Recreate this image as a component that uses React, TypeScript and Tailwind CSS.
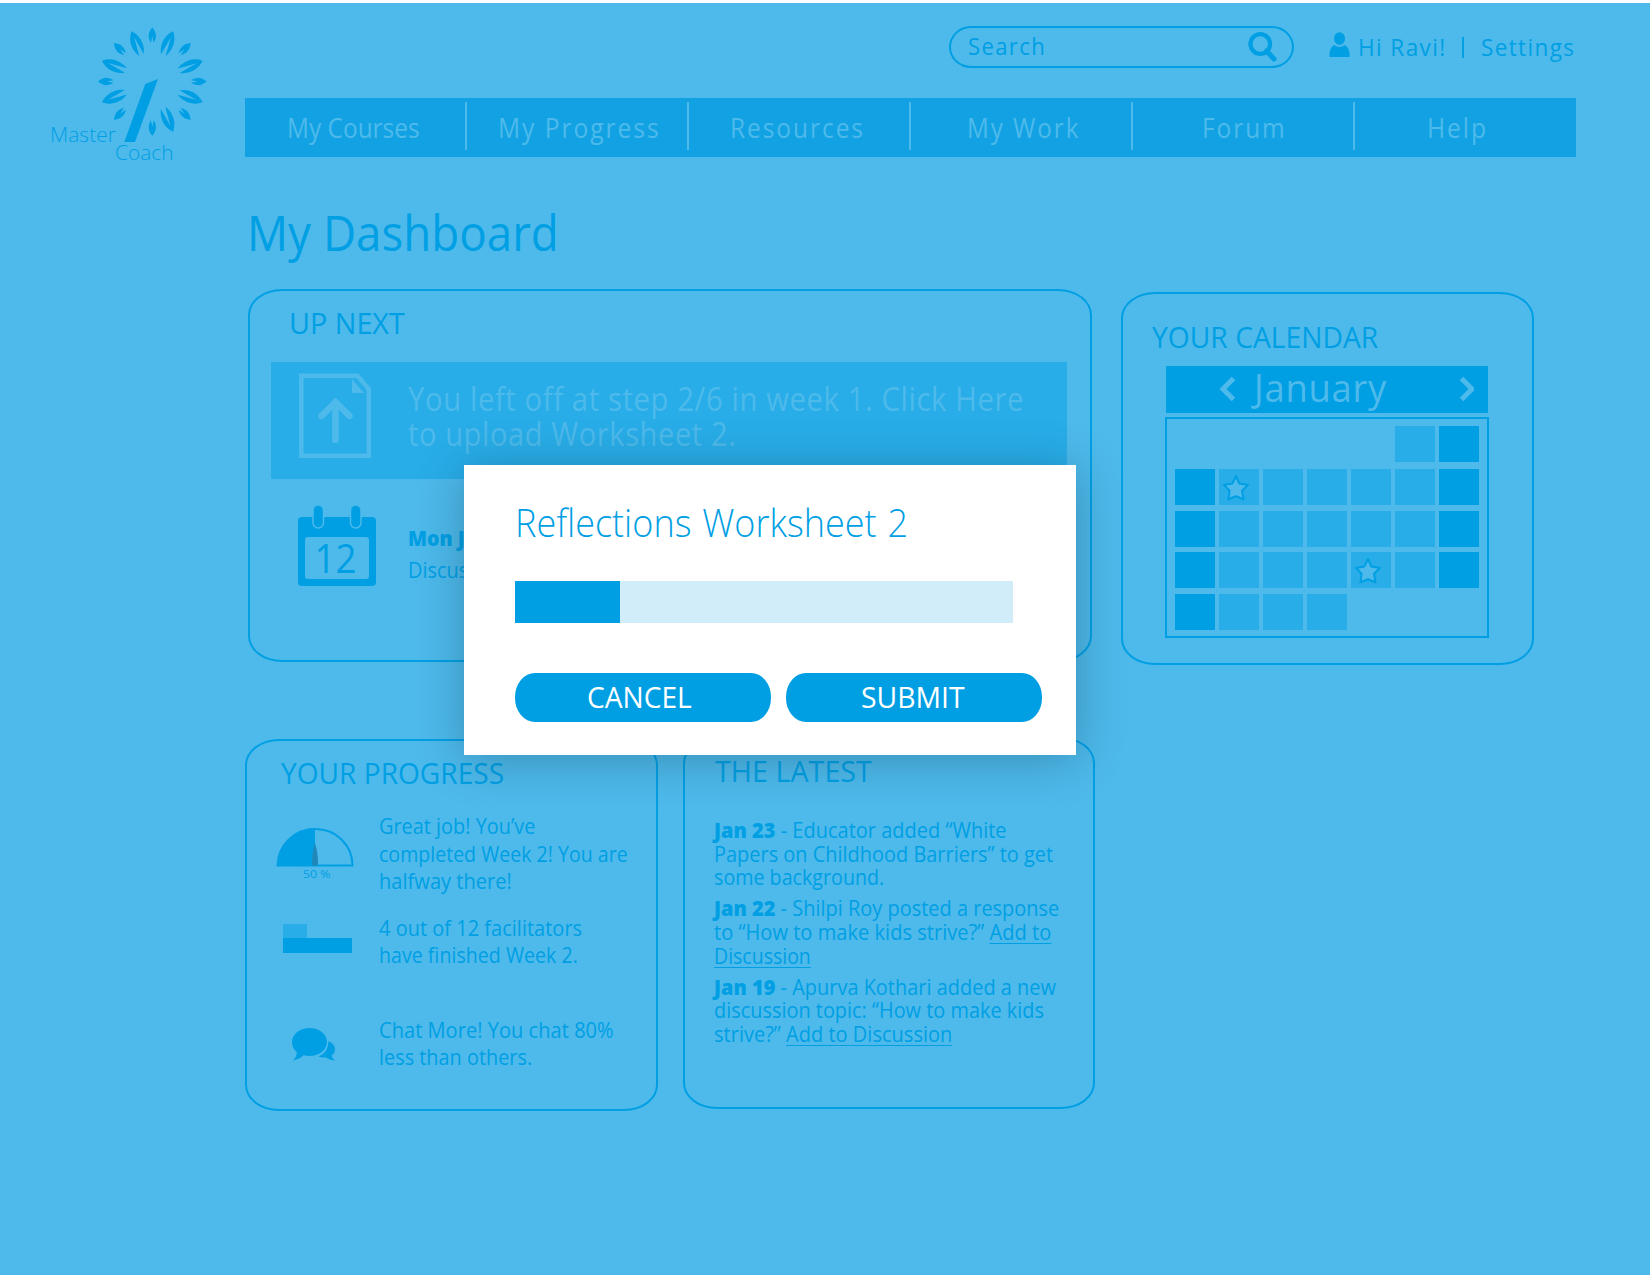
import React, { useLayoutEffect, useRef, useState } from "react";

const BLUE = "#009FE4";
const SKY = "#4DBAEB";

/** One line of text, condensed or widened to fill exactly `w` pixels. */
function Line({ w, className = "", children }: { w: number; className?: string; children: React.ReactNode }) {
  const ref = useRef<HTMLSpanElement>(null);
  const [scale, setScale] = useState(1);
  useLayoutEffect(() => {
    if (ref.current && ref.current.offsetWidth) {
      setScale(w / ref.current.offsetWidth);
    }
  }, [w]);
  return (
    <span className={"block whitespace-nowrap " + className} style={{ width: w }}>
      <span ref={ref} className="inline-block origin-left align-top" style={{ transform: `scaleX(${scale})` }}>
        {children}
      </span>
    </span>
  );
}

function Logo() {
  const all = Array.from({ length: 16 }, (_, i) => i).filter((i) => i !== 9);
  return (
    <svg width="245" height="172" viewBox="0 0 245 172" fill={BLUE}>
      {all.map((i) => (
        <g key={i} transform={`translate(152.300 81.500) rotate(${i * 22.5})`}>
          {i % 2 === 0 ? (
            <path d="M0-54.300C2.600-51 3.900-48 3.600-45C3.400-42.500 2.500-40.500 1.300-38.800L0-45.500L-1.300-38.800C-2.500-40.500-3.400-42.500-3.600-45C-3.900-48-2.600-51 0-54.300Z" />
          ) : (
            <path d="M0-54.400C4-50 5.900-44.500 5.600-39C5.400-35 4.300-31.500 2.600-28.600L.2-48L-2.300-28.600C-4.300-31.500-5.400-35-5.600-39C-5.900-44.500-4-50 0-54.400Z" />
          )}
        </g>
      ))}
      <path d="M145.300 84L158 79L135 142H124.300Z" />
      <text x="50" y="142" fontSize="20" fontWeight="350" textLength="66" lengthAdjust="spacingAndGlyphs">Master</text>
      <text x="115" y="160" fontSize="20" fontWeight="350" textLength="58.500" lengthAdjust="spacingAndGlyphs">Coach</text>
    </svg>
  );
}

const NAV = [
  { label: "My Courses", w: 133, cls: "pl-[42px]" },
  { label: "My Progress", w: 163, cls: "pl-[31px] tracking-[0.08em]" },
  { label: "Resources", w: 135, cls: "pl-[41px] tracking-[0.08em]" },
  { label: "My Work", w: 113, cls: "pl-[56px] tracking-[0.08em]" },
  { label: "Forum", w: 85, cls: "pl-[69px] tracking-[0.08em]" },
  { label: "Help", w: 61, cls: "pl-[72px] tracking-[0.08em]" },
];

const CELLS = ["     md", "dsmmmmd", "dmmmmmd", "dmmmsmd", "dmmm   "];

function Star() {
  return (
    <svg width="30" height="30" viewBox="0 0 30 30" className="ml-[2px] mt-[4px]">
      <path
        d="M15 3L18.400 10.600L27 11.900L21 17.700L22.600 26.300L15 23.200L7.400 26.300L8.600 17.700L3 11.900L11.300 10.600Z"
        fill={SKY}
        stroke={BLUE}
        strokeWidth="2"
        strokeLinejoin="round"
      />
    </svg>
  );
}

function Calendar() {
  return (
    <section className="mt-[3px] ml-[29px] h-[372.500px] w-[413px] border-2 border-[#009FE4] [border-radius:34px/26px]">
      <h2 className="ml-[28.500px] pt-[25px] text-[30px] leading-[36px]">
        <Line w={226}>YOUR CALENDAR</Line>
      </h2>
      <div className="mt-[10.500px] ml-[42.500px] flex h-[47px] w-[322px] bg-[#009FE4] text-[#4DBAEB]">
        <svg width="20" height="30" viewBox="0 0 20 30" fill="none" stroke={SKY} strokeWidth="5" className="ml-[52px] mt-[8px]">
          <path d="M15.500 4.500L5 15L15.500 25.500" />
        </svg>
        <div className="ml-[16px] w-[200px] text-[38px] leading-[42px]">
          <Line w={133} className="tracking-[0.02em]">January</Line>
        </div>
        <svg width="20" height="30" viewBox="0 0 20 30" fill="none" stroke={SKY} strokeWidth="5" className="mt-[8px]">
          <path d="M7.500 4.500L18 15L7.500 25.500" />
        </svg>
      </div>
      <div className="mt-[4.500px] ml-[42px] h-[221px] w-[324px] border-2 border-[#009FE4] pt-[7px] pl-[8px]">
        {CELLS.map((row, r) => (
          <div key={r} className={"flex h-[36px] gap-[4px] " + (r === 0 ? "mb-[7px]" : "mb-[5.700px]")}>
            {row.split("").map((c, i) => (
              <div key={i} className={"w-[40px] " + (c === "d" ? "bg-[#009FE4]" : c === " " ? "" : "bg-[#28ADE8]")}>
                {c === "s" && <Star />}
              </div>
            ))}
          </div>
        ))}
      </div>
    </section>
  );
}

function UpNext() {
  return (
    <section className="ml-[3px] h-[372.500px] w-[844px] border-2 border-[#009FE4] [border-radius:34px/26px]">
      <h2 className="ml-[39px] pt-[14px] text-[30px] leading-[36px]">
        <Line w={116}>UP NEXT</Line>
      </h2>
      <div className="mt-[21px] ml-[21px] flex h-[117px] w-[796px] bg-[#28ADE8] text-[#4DBAEB]">
        <svg width="76" height="88" viewBox="0 0 76 88" className="ml-[26px] mt-[10px]" fill="none" stroke={SKY}>
          <path d="M4.300 3.800H60.500L71.800 17V83.800H4.300Z" strokeWidth="4.500" />
          <path d="M55 7V21H67Z" fill={SKY} stroke="none" />
          <path d="M38.500 68V31M24.500 44L38.500 30L52.500 44" strokeWidth="6.500" strokeLinecap="round" />
        </svg>
        <div className="ml-[35px] pt-[18.700px] text-[33px] leading-[35.700px] tracking-[0.02em]">
          <Line w={616}>You left off at step 2/6 in week 1. Click Here</Line>
          <Line w={328}>to upload Worksheet 2.</Line>
        </div>
      </div>
      <div className="flex">
        <svg width="80" height="84" viewBox="0 0 80 84" className="ml-[46px] mt-[24px]">
          <rect x="2" y="14" width="78" height="69" rx="4" fill={BLUE} />
          <rect x="9" y="34" width="64" height="42" rx="3" fill={SKY} />
          <rect x="17" y="2" width="10.500" height="23" rx="5.200" fill={BLUE} stroke={SKY} strokeWidth="1.500" />
          <rect x="54.500" y="2" width="10.500" height="23" rx="5.200" fill={BLUE} stroke={SKY} strokeWidth="1.500" />
          <text x="18.500" y="70" fontSize="39.500" textLength="42" lengthAdjust="spacingAndGlyphs" fill={BLUE}>12</text>
        </svg>
        <div className="ml-[32px] mt-[44px]">
          <Line w={110} className="text-[20.500px] leading-[30.500px] font-extrabold">Mon Jan 12</Line>
          <Line w={99} className="text-[21.300px] leading-[31px]">Discussion</Line>
        </div>
      </div>
    </section>
  );
}

function Progress() {
  return (
    <section className="mt-[2px] h-[372.500px] w-[413px] border-2 border-[#009FE4] text-[21.300px] leading-[27px] [border-radius:34px/26px]">
      <h2 className="ml-[34px] pt-[14px] text-[30px] leading-[36px]">
        <Line w={223}>YOUR PROGRESS</Line>
      </h2>
      <div className="mt-[21.500px] flex leading-[27.500px]">
        <div className="w-[132px] shrink-0">
          <svg width="80" height="54" viewBox="0 0 80 54" className="ml-[28.500px] mt-[15px]">
            <path d="M1.500 38.500A37.500 37 0 0 1 39 1V38.500Z" fill={BLUE} />
            <path d="M1.500 38.500A37.500 37 0 0 1 39 2A37 36.500 0 0 1 76.500 38.500Z" fill="none" stroke={BLUE} strokeWidth="2" />
            <path d="M39 16C41 22 42 29 42 36Q42 39 39 39Q36 39 36 36C36 29 37 22 39 16Z" fill="#2088B8" />
            <text x="27" y="50.500" fontSize="11.500" textLength="27.500" lengthAdjust="spacingAndGlyphs" fill={BLUE}>50 %</text>
          </svg>
        </div>
        <div>
          <Line w={156}>Great job! You’ve</Line>
          <Line w={249}>completed Week 2! You are</Line>
          <Line w={133}>halfway there!</Line>
        </div>
      </div>
      <div className="mt-[19px] flex">
        <div className="w-[132px] shrink-0 pt-[10.500px] pl-[36px]">
          <div className="h-[14px] w-[24px] bg-[#28ADE8]" />
          <div className="h-[15px] w-[69px] bg-[#009FE4]" />
        </div>
        <div>
          <Line w={203}>4 out of 12 facilitators</Line>
          <Line w={199}>have finished Week 2.</Line>
        </div>
      </div>
      <div className="mt-[48px] flex">
        <div className="w-[132px] shrink-0">
          <svg width="46" height="36" viewBox="0 0 46 36" fill={BLUE} className="ml-[44px] mt-[11px]">
            <path d="M18.500 1C28 1 36 7 36 15S28 29 18.500 29Q15.500 29 12.500 28.300Q9 32 2 33.500Q5.500 30 6 25.500Q1 21 1 15C1 7 9 1 18.500 1Z" />
            <path d="M37.500 14Q44 17 44 22.500Q44 26 40.500 28.500Q41 31.500 44 33.500Q38 33 35 30.200Q31 31 27.500 29.500Q37.500 25.500 37.500 14Z" />
          </svg>
        </div>
        <div>
          <Line w={235}>Chat More! You chat 80%</Line>
          <Line w={153}>less than others.</Line>
        </div>
      </div>
    </section>
  );
}

function Latest() {
  const link = "underline decoration-1 underline-offset-[3px]";
  return (
    <section className="ml-[24.500px] h-[372.500px] w-[412.500px] border-2 border-[#009FE4] [border-radius:34px/26px]">
      <h2 className="ml-[30.500px] pt-[14px] text-[30px] leading-[36px]">
        <Line w={157}>THE LATEST</Line>
      </h2>
      <div className="mt-[29.500px] ml-[29px] flex flex-col gap-[7.600px] text-[21.300px] leading-[23.600px]">
        <p>
          <Line w={293}><b className="font-extrabold">Jan 23</b> - Educator added “White</Line>
          <Line w={339}>Papers on Childhood Barriers” to get</Line>
          <Line w={170}>some background.</Line>
        </p>
        <p>
          <Line w={345}><b className="font-extrabold">Jan 22</b> - Shilpi Roy posted a response</Line>
          <Line w={337}>to “How to make kids strive?” <span className={link}>Add to</span></Line>
          <Line w={97}><span className={link}>Discussion</span></Line>
        </p>
        <p>
          <Line w={342}><b className="font-extrabold">Jan 19</b> - Apurva Kothari added a new</Line>
          <Line w={330}>discussion topic: “How to make kids</Line>
          <Line w={238}>strive?” <span className={link}>Add to Discussion</span></Line>
        </p>
      </div>
    </section>
  );
}

function Modal() {
  const button = "flex h-[49px] w-[256px] bg-[#009FE4] text-[30px] leading-[47px] text-white [border-radius:20px/24px]";
  return (
    <div
      role="dialog"
      className="absolute top-[464.500px] left-[463.500px] h-[290px] w-[612px] bg-white pt-[34px] pl-[51.500px] shadow-[0_4px_44px_rgba(20,50,70,0.33)]"
    >
      <h2 className="text-[38.500px] leading-[46px] font-light [word-spacing:0.04em]">
        <Line w={393}>Reflections Worksheet 2</Line>
      </h2>
      <div className="mt-[36.500px] h-[42px] w-[498px] bg-[#D2EDFA]">
        <div className="h-full w-[104.500px] bg-[#009FE4]" />
      </div>
      <div className="mt-[49.500px] flex gap-[15px]">
        <button className={button + " pl-[72px]"}>
          <Line w={105}>CANCEL</Line>
        </button>
        <button className={button + " pl-[74.500px]"}>
          <Line w={104}>SUBMIT</Line>
        </button>
      </div>
    </div>
  );
}

export default function App() {
  return (
    <div className="relative flex h-[1275px] w-[1650px] overflow-hidden bg-[#4DBAEB] font-['Open_Sans',sans-serif] text-[#009FE4] shadow-[inset_0_3px_0_#fff]">
      <aside className="w-[245px] shrink-0">
        <Logo />
      </aside>
      <div className="flex flex-col">
        <header className="flex h-[97.500px] pt-[26px] text-[23px] leading-[28px] tracking-[0.06em]">
          <div className="ml-[704px] flex h-[42px] w-[345px] justify-between border-2 border-[#009FE4] pt-[3px] pl-[17px] [border-radius:22px/21px]">
            <Line w={78} className="mt-[0.700px]">Search</Line>
            <svg width="32" height="32" viewBox="0 0 32 32" fill="none" stroke={BLUE} className="mr-[13.500px]">
              <circle cx="13.300" cy="13" r="9.800" strokeWidth="4.300" />
              <path d="M19.500 20L27 28" strokeWidth="5" strokeLinecap="round" />
            </svg>
          </div>
          <div className="flex pt-[6px]">
            <svg width="22" height="27" viewBox="0 0 22 27" fill={BLUE} className="ml-[34px]">
              <ellipse cx="11.500" cy="6.500" rx="5.500" ry="6.300" />
              <path d="M6 13Q11.500 17 17 13Q21.500 15.500 21.700 24Q21.700 25 20.500 25H2.500Q1.300 25 1.300 24Q1.500 15.500 6 13Z" />
            </svg>
            <Line w={88.5} className="mt-[1px] ml-[7.500px]">Hi Ravi!</Line>
            <div className="ml-[16px] mt-[5px] h-[21px] w-[2px] bg-[#009FE4]" />
            <Line w={94} className="mt-[1px] ml-[17px]">Settings</Line>
          </div>
        </header>
        <nav className="flex h-[59px] w-[1331px] bg-[#12A2E4] text-[27px] leading-[60px] text-[#4DBAEB]">
          {NAV.map((n, i) => (
            <div key={n.label} className="flex w-[222px]">
              <div className={"w-[220px] shrink-0 " + n.cls}>
                <Line w={n.w}>{n.label}</Line>
              </div>
              {i < 5 && <div className="mt-[4.500px] h-[48px] w-[2px] shrink-0 bg-[#4DBAEB]" />}
            </div>
          ))}
        </nav>
        <h1 className="mt-[45.500px] ml-[1.500px] text-[48.500px] leading-[60px]">
          <Line w={312}>My Dashboard</Line>
        </h1>
        <main>
          <div className="mt-[27px] flex">
            <UpNext />
            <Calendar />
          </div>
          <div className="mt-[72px] flex">
            <Progress />
            <Latest />
          </div>
        </main>
      </div>
      <Modal />
    </div>
  );
}
